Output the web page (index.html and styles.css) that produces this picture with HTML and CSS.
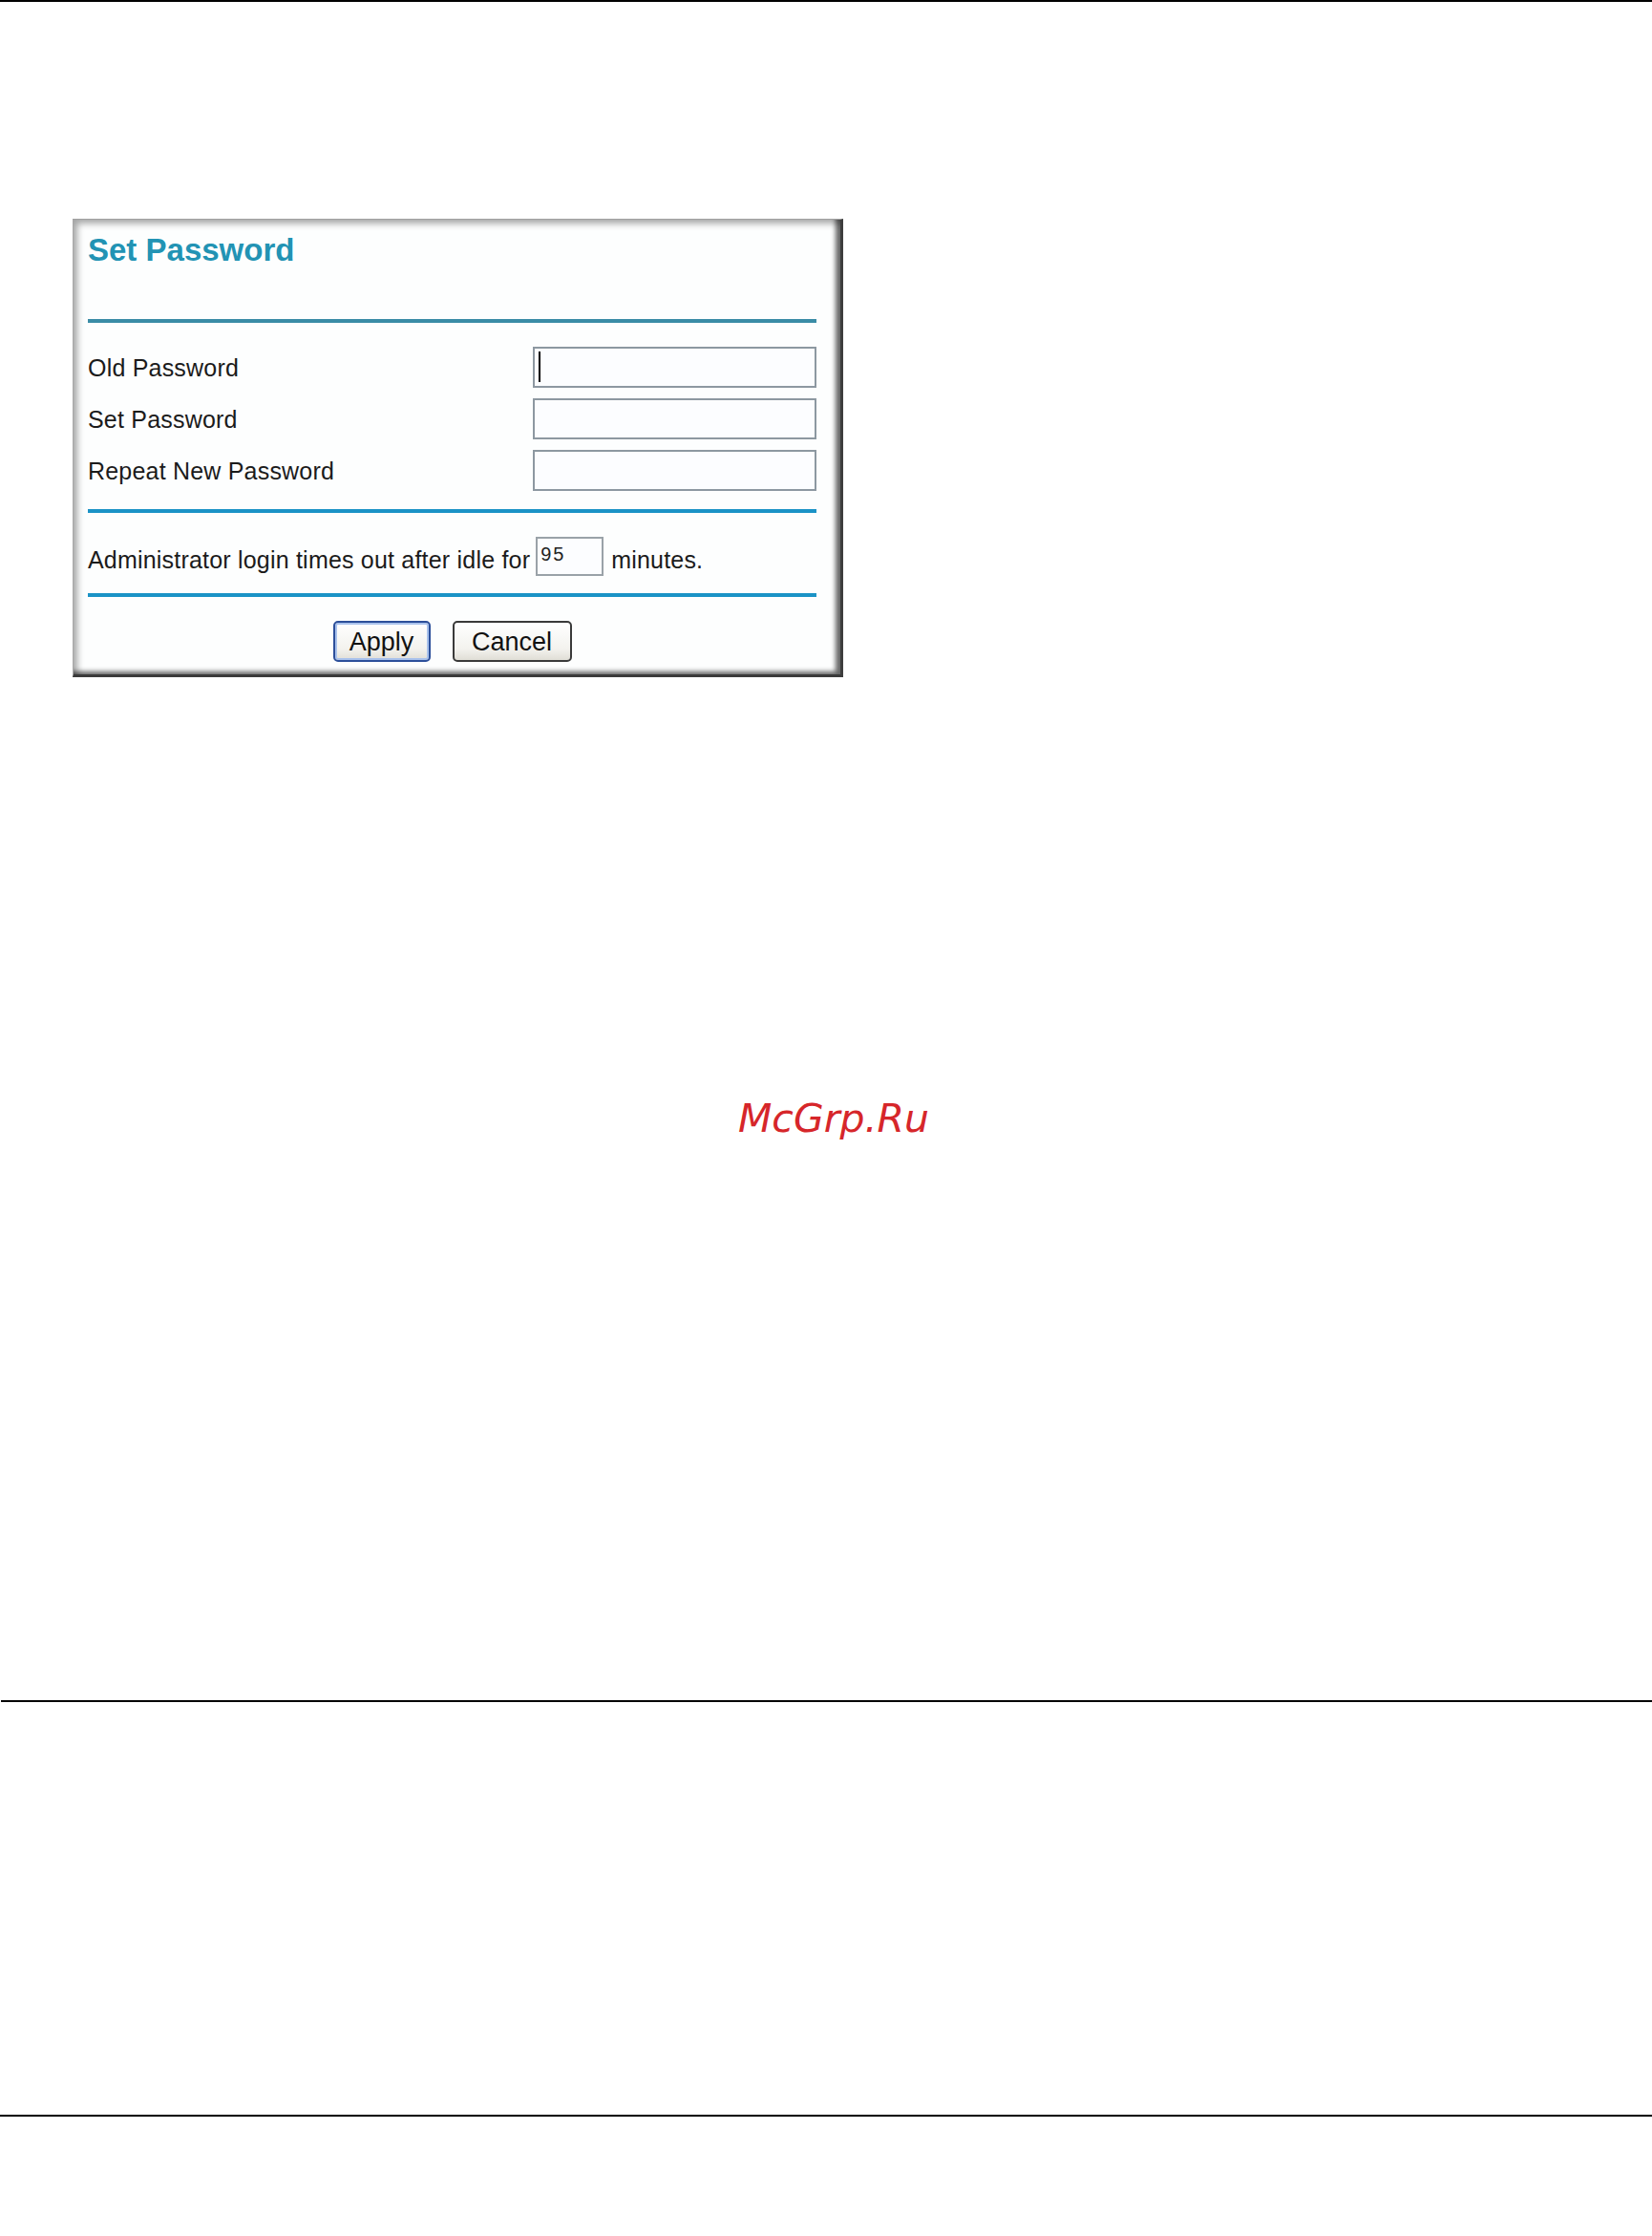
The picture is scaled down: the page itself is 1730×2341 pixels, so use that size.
FILE: index.html
```html
<!DOCTYPE html>
<html lang="en">
<head>
    <meta charset="UTF-8">
    <meta name="viewport" content="width=device-width, initial-scale=1.0">
    <title>Set Password</title>
    <link rel="stylesheet" href="styles.css">
</head>
<body>
    <div class="rule"></div>

    <div id="panel">
        <h3 id="title">Set Password</h3>
        <div class="sep sep-dark"></div>

        <div id="fields">
            <div class="label">Old Password</div>
            <div class="field"><span class="caret"></span></div>
            <div class="label">Set Password</div>
            <div class="field"></div>
            <div class="label">Repeat New Password</div>
            <div class="field"></div>
        </div>

        <div class="sep"></div>

        <div id="timeout">
            <span class="txt">Administrator login times out after idle for</span>
            <div class="field small">95</div>
            <span class="txt">minutes.</span>
        </div>

        <div class="sep"></div>

        <div id="buttons">
            <button class="btn btn-default">Apply</button>
            <button class="btn">Cancel</button>
        </div>
    </div>

    <div id="mark">McGrp.Ru</div>

    <div class="rule rule-mid"></div>
    <div class="rule rule-end"></div>
</body>
</html>
```

FILE: styles.css
```css
* { box-sizing: border-box; }
body { margin: 0; background: white; font-family: "Liberation Sans", Arial, sans-serif; }

.rule { height: 2px; background: black; }
.rule-mid { margin-top: 586px; margin-left: 1px; }
.rule-end { margin-top: 432px; }

/* framed settings box */
#panel {
    width: 807px;
    margin: 227px 0 0 76px;
    padding: 13px 25px 13px 15px;
    background: #fdfefe;
    border-top: 1px solid #a0a0a0;
    border-left: 1px solid #a8a8a8;
    border-right: 3px solid #3e3e3e;
    border-bottom: 3px solid #3a3a3a;
    box-shadow: inset 7px 7px 7px -3px rgba(0,0,0,0.35),
                inset -8px -6px 5px -3px rgba(0,0,0,0.6);
}
#title {
    margin: 0; height: 38px;
    font-size: 33px; line-height: 38px; font-weight: bold;
    color: #2293b4;
}
.sep { height: 4px; background: #1b93c6; margin-top: 19px; }
.sep-dark { background: #3a8ca6; margin-top: 53px; }

#fields {
    display: grid;
    grid-template-columns: 466px 297px;
    grid-auto-rows: 43px;
    row-gap: 11px;
    align-items: center;
    margin-top: 25px;
}
.label, .txt { font-size: 25px; line-height: 30px; color: #1b1b1b; letter-spacing: 0.2px; }
.field {
    position: relative;
    height: 43px;
    border: 2px solid #8d98a1;
    background: #fcfdff;
}
.caret {
    position: absolute; left: 4px; top: 3px;
    width: 2px; height: 32px; background: black;
}

#timeout {
    display: flex; align-items: center;
    height: 41px; margin-top: 25px;
}
#timeout .txt { margin-top: 6px; }
.field.small {
    width: 71px; height: 41px;
    margin: 0 8px 0 6px;
    padding: 5px 0 0 3px;
    font-size: 20px; line-height: 22px; letter-spacing: 2px; color: #222;
    border-color: #9aa2a8;
}
#timeout + .sep { margin-top: 18px; }

#buttons {
    display: flex; justify-content: center; gap: 23px;
    margin-top: 25px;
}
.btn {
    height: 43px; padding: 2px 0 0;
    font-family: "Liberation Sans", Arial, sans-serif;
    font-size: 27px; color: #111;
    border: 2px solid #3a3a3a; border-radius: 5px;
    background: linear-gradient(#ffffff, #f3f2ee 70%, #e0ded6);
    width: 125px;
}
.btn-default {
    width: 102px;
    border-color: #2c4f9a;
    box-shadow: inset 0 0 0 2px #a9c2ec;
}

#mark {
    margin-top: 439px; padding-left: 773px;
    height: 46px;
    font-family: "DejaVu Sans", sans-serif; font-style: oblique;
    font-size: 41px; line-height: 46px;
    color: #d6262a;
}
```
